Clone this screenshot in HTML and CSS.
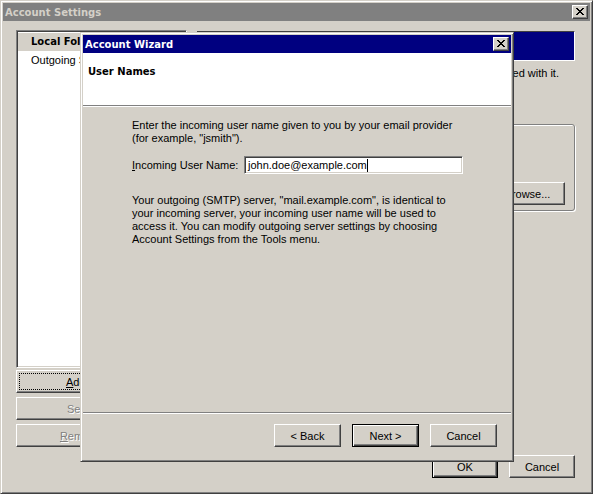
FILE: index.html
```html
<!DOCTYPE html>
<html lang="en">
<head>
<meta charset="utf-8">
<title>Account Settings</title>
<link rel="stylesheet" href="styles.css">
</head>
<body>
<div class="window main-window">
  <div class="titlebar inactive">
    <span class="title">Account Settings</span>
    <button class="cap-btn" aria-label="Close">
      <svg width="8" height="7" viewBox="0 0 8 7" shape-rendering="crispEdges"><path d="M0 0h2v1h-2z M6 0h2v1h-2z M1 1h2v1h-2z M5 1h2v1h-2z M2 2h4v1h-4z M3 3h2v1h-2z M2 4h4v1h-4z M1 5h2v1h-2z M5 5h2v1h-2z M0 6h2v1h-2z M6 6h2v1h-2z"/></svg>
    </button>
  </div>
  <div class="content">
    <div class="columns">
      <div class="left-col">
        <div class="tree">
          <div class="tree-row selected">Local Folders</div>
          <div class="tree-row">Outgoing Server (SMTP)</div>
        </div>
        <div class="left-buttons">
          <button class="btn focused"><u>A</u>dd Account...</button>
          <button class="btn" disabled>Se<u>t</u> as Default</button>
          <button class="btn" disabled><u>R</u>emove Account</button>
        </div>
      </div>
      <div class="right-col">
        <div class="pane-header"></div>
        <p class="pane-desc">This account has no server associated with it.</p>
        <div class="groupbox">
          <div class="group-row">
            <div class="textbox dir-box"></div>
            <button class="btn browse-btn">Browse...</button>
          </div>
        </div>
      </div>
    </div>
    <div class="footer">
      <button class="btn default">OK</button>
      <button class="btn">Cancel</button>
    </div>
  </div>
</div>

<div class="window wizard">
  <div class="titlebar active">
    <span class="title">Account Wizard</span>
    <button class="cap-btn" aria-label="Close">
      <svg width="8" height="7" viewBox="0 0 8 7" shape-rendering="crispEdges"><path d="M0 0h2v1h-2z M6 0h2v1h-2z M1 1h2v1h-2z M5 1h2v1h-2z M2 2h4v1h-4z M3 3h2v1h-2z M2 4h4v1h-4z M1 5h2v1h-2z M5 5h2v1h-2z M0 6h2v1h-2z M6 6h2v1h-2z"/></svg>
    </button>
  </div>
  <div class="wiz-header">User Names</div>
  <div class="wiz-body">
    <p class="wiz-text">Enter the incoming user name given to you by your email provider (for example, "jsmith").</p>
    <div class="field-row">
      <span class="field-label"><u>I</u>ncoming User Name:</span>
      <div class="textbox user-box">john.doe@example.com<span class="caret"></span></div>
    </div>
    <p class="wiz-text second">Your outgoing (SMTP) server, "mail.example.com", is identical to your incoming server, your incoming user name will be used to access it. You can modify outgoing server settings by choosing Account Settings from the Tools menu.</p>
  </div>
  <div class="wiz-footer">
    <button class="btn">&lt; Back</button>
    <button class="btn default">Next &gt;</button>
    <button class="btn">Cancel</button>
  </div>
</div>
</body>
</html>
```

FILE: styles.css
```css
body {
  margin: 0;
  background: #d4d0c8;
  font: 11px "Liberation Sans", Arial, sans-serif;
  color: #000;
}

p { margin: 0; }

.window {
  box-sizing: border-box;
  display: flex;
  flex-direction: column;
  background: #d4d0c8;
  border: 1px solid;
  border-color: #d4d0c8 #404040 #404040 #d4d0c8;
  box-shadow: inset 1px 1px #fff, inset -1px -1px #808080;
  padding: 2px;
}

.main-window {
  width: 593px;
  height: 494px;
}

.wizard {
  position: absolute;
  left: 80px;
  top: 32px;
  width: 434px;
  height: 430px;
}

.titlebar {
  flex-shrink: 0;
  height: 18px;
  display: flex;
  align-items: center;
  justify-content: space-between;
  padding: 0 2px;
  font: bold 10px "DejaVu Sans", Verdana, sans-serif;
}

.titlebar.inactive { background: #808080; color: #d4d0c8; }
.titlebar.active { background: #000080; color: #fff; }

.cap-btn {
  box-sizing: border-box;
  width: 16px;
  height: 14px;
  padding: 0 1px 1px 0;
  display: flex;
  align-items: center;
  justify-content: center;
  background: #d4d0c8;
  border: 1px solid;
  border-color: #fff #404040 #404040 #fff;
  box-shadow: inset -1px -1px #808080;
}

.btn {
  box-sizing: border-box;
  height: 23px;
  padding: 0;
  background: #d4d0c8;
  border: 1px solid;
  border-color: #fff #404040 #404040 #fff;
  box-shadow: inset -1px -1px #808080;
  font: 11px "Liberation Sans", Arial, sans-serif;
  color: #000;
}

.btn.default {
  border-color: #000;
  box-shadow: inset 1px 1px #fff, inset -1px -1px #404040, inset -2px -2px #808080;
}

.btn:disabled {
  color: #808080;
  text-shadow: 1px 1px 0 #fff;
}

.btn.focused {
  outline: 1px dotted #000;
  outline-offset: -4px;
}

/* main window body */
.content {
  flex: 1;
  display: flex;
  flex-direction: column;
  padding: 9px 15px 13px 13px;
}

.columns {
  display: grid;
  grid-template-columns: 171px 1fr;
  column-gap: 10px;
}

.left-col {
  display: flex;
  flex-direction: column;
}

.tree {
  box-sizing: border-box;
  height: 338px;
  background: #fff;
  border: 1px solid;
  border-color: #808080 #fff #fff #808080;
  box-shadow: inset 1px 1px #404040, inset -1px -1px #d4d0c8;
  padding: 2px 0 0 1px;
}

.tree-row {
  height: 18px;
  line-height: 18px;
  padding-left: 13px;
  white-space: nowrap;
}

.tree-row.selected {
  background: #d4d0c8;
  font: bold 10px/18px "DejaVu Sans", Verdana, sans-serif;
}

.left-buttons {
  margin-top: 2px;
  display: flex;
  flex-direction: column;
  gap: 4px;
}

.right-col {
  display: flex;
  flex-direction: column;
}

.pane-header {
  box-sizing: border-box;
  margin-top: 1px;
  height: 30px;
  background: #000080;
  border: 1px solid;
  border-color: #404040 #fff #fff #404040;
}

.pane-desc {
  margin-top: 6px;
  line-height: 13px;
  text-align: right;
  padding-right: 16px;
  white-space: nowrap;
}

.groupbox {
  box-sizing: border-box;
  margin-top: 44px;
  height: 87px;
  border: 1px solid #808080;
  border-radius: 3px;
  box-shadow: 1px 1px 0 #fff, inset 1px 1px 0 #fff;
  padding: 0 9px 5px 9px;
  display: flex;
  flex-direction: column;
  justify-content: flex-end;
}

.group-row {
  display: flex;
  align-items: center;
  gap: 8px;
}

.textbox {
  box-sizing: border-box;
  height: 18px;
  line-height: 14px;
  background: #fff;
  border: 1px solid;
  border-color: #808080 #fff #fff #808080;
  box-shadow: inset 1px 1px #404040, inset -1px -1px #d4d0c8;
  padding: 1px 2px 0 3px;
  white-space: nowrap;
  overflow: hidden;
}

.dir-box { flex: 1; height: 20px; }

.browse-btn { width: 75px; flex-shrink: 0; }

.footer {
  margin-top: auto;
  display: flex;
  justify-content: flex-end;
  gap: 11px;
}

.footer .btn { width: 66px; }

/* wizard */
.wiz-header {
  flex-shrink: 0;
  height: 52px;
  box-sizing: border-box;
  background: #fff;
  padding: 12px 0 0 5px;
  font: bold 10px/13px "DejaVu Sans", Verdana, sans-serif;
}

.wiz-body {
  flex: 1;
  border-top: 1px solid #808080;
  box-shadow: inset 0 1px 0 #fff;
  padding: 13px 0 0 49px;
}

.wiz-text {
  max-width: 332px;
  line-height: 13px;
}

.wiz-text.second { margin-top: 20px; }

.field-row {
  margin-top: 11px;
  display: flex;
  align-items: center;
}

.field-label {
  width: 112px;
  flex-shrink: 0;
}

.user-box {
  width: 219px;
  height: 18px;
}

.caret {
  display: inline-block;
  width: 1px;
  height: 13px;
  background: #000;
  vertical-align: -3px;
}

.wiz-footer {
  flex-shrink: 0;
  display: flex;
  justify-content: flex-end;
  gap: 11px;
  padding: 11px 14px 12px;
  border-top: 1px solid #808080;
  box-shadow: inset 0 1px 0 #fff;
}

.wiz-footer .btn { width: 67px; }
```
